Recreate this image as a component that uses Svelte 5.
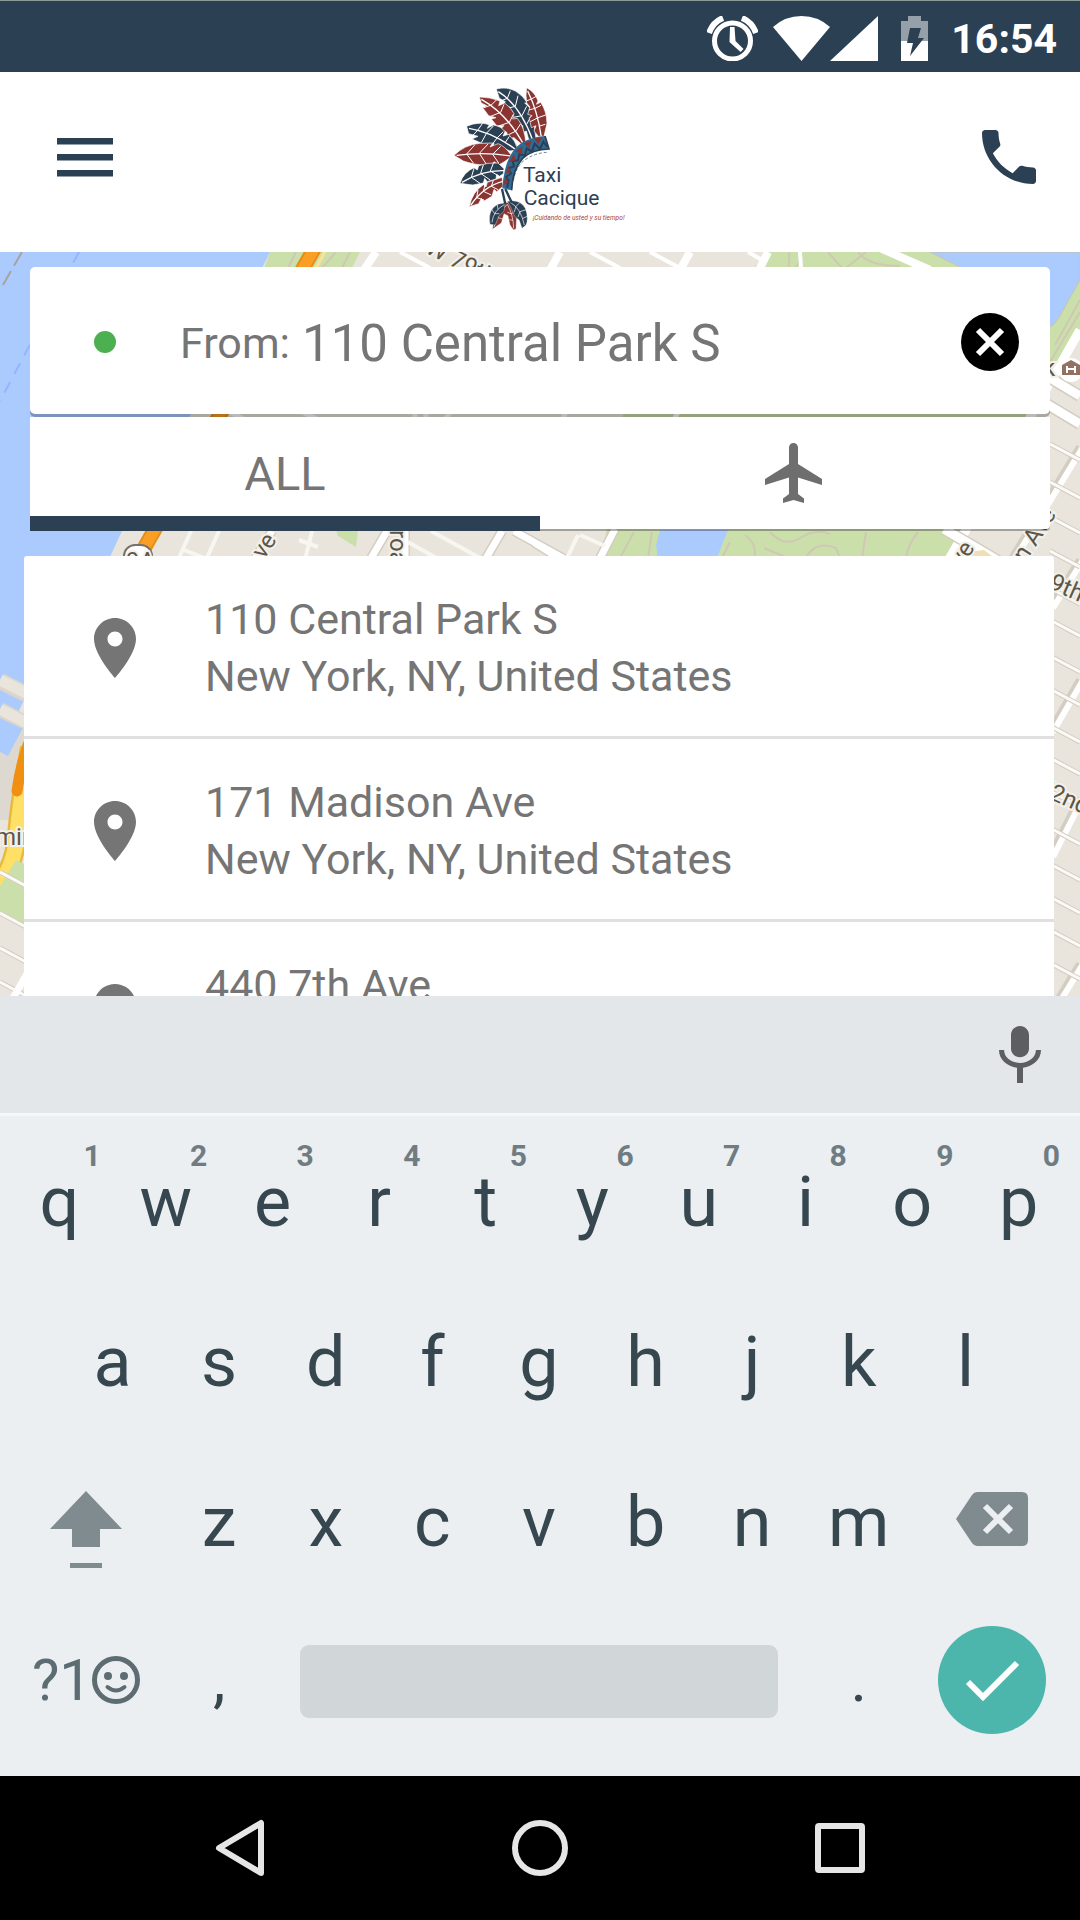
<script lang="ts">
  interface Place {
    street: string;
    city: string;
  }

  interface Feather {
    fill: string;
    body: string;
    shaft: string;
    barbs: string;
    small?: boolean;
  }

  const NAVY = '#2c4054';
  const RED = '#8a3531';

  const places: Place[] = [
    { street: '110 Central Park S', city: 'New York, NY, United States' },
    { street: '171 Madison Ave', city: 'New York, NY, United States' },
    { street: '440 7th Ave', city: 'New York, NY, United States' },
  ];

  const topRow = [...'qwertyuiop'].map((letter, i) => ({ letter, hint: (i + 1) % 10 }));
  const homeRow = [...'asdfghjkl'];
  const bottomRow = [...'zxcvbnm'];

  let from = $state('110 Central Park S');
  let tab = $state('all');

  // Headdress, from the top right feather round to the lower left one.
  const feathers: Feather[] = [
    {
      fill: NAVY,
      body: 'M199 42Q230 34 256 48Q280 62 292 84L284 84L302 101L306 126L298 128L312 146L318 192L296 193L289 168L280 172L278 152L262 140L238 130L247 108L232 108L240 96L218 92L226 80L208 70Z',
      shaft: 'M205 50Q270 90 308 195',
      barbs: 'M232 70L241 47M232 70L212 78M256 94L264 62M256 94L232 100M276 122L290 94M276 122L250 127M290 148L304 122',
    },
    {
      fill: RED,
      body: 'M290 38Q316 52 324 78L319 88L332 82Q350 108 351 145L342 184L325 184L312 168L318 152L304 158L298 130L306 122L293 118L300 96L290 84Q286 60 290 38Z',
      shaft: 'M293 48Q322 105 334 186',
      barbs: 'M304 72L319 64M304 72L289 78M315 100L333 91M315 100L296 105M324 128L347 120M324 128L301 140M329 153L346 148',
    },
    {
      fill: RED,
      body: 'M148 66Q180 66 210 78L206 92L224 84Q244 98 252 116L248 132L262 130Q284 156 288 207L277 210L252 188L235 190L230 172L212 162L222 152L200 152L184 132L198 128L176 122L158 98L170 92L154 84Z',
      shaft: 'M154 73Q230 115 282 210',
      barbs: 'M184 90L199 75M184 90L162 98M212 112L222 88M212 112L182 124M238 142L250 118M238 142L206 153M258 168L272 146M258 168L234 180',
    },
    {
      fill: NAVY,
      body: 'M110 154Q145 138 178 149L172 160L190 150Q214 154 225 170L219 183L236 178Q256 196 264 224L240 228L206 214L188 217L192 205L160 207L126 192L144 184L116 176Z',
      shaft: 'M117 160Q190 172 260 226',
      barbs: 'M143 166L157 146M143 166L124 186M170 174L190 153M170 174L154 203M202 188L220 170M202 188L184 212M226 202L238 184',
    },
    {
      fill: RED,
      body: 'M72 241Q104 209 150 205L188 204L180 216L204 206Q224 212 243 240L242 246Q226 260 206 270L192 260L184 272Q132 270 100 258Z',
      shaft: 'M80 241Q160 230 243 243',
      barbs: 'M110 237L134 210M110 237L130 264M148 235L174 207M148 235L170 269M188 238L212 214M188 238L206 264',
    },
    {
      fill: NAVY,
      body: 'M90 325Q100 292 132 278L142 285L146 272Q172 262 204 264L222 281L220 296L208 304L200 298L198 312L172 320L164 310L160 324L128 330Z',
      shaft: 'M96 322Q158 285 223 287',
      barbs: 'M124 307L132 280M124 307L150 325M152 295L160 270M152 295L180 315M181 288L190 265M181 288L206 303',
    },
    {
      fill: RED,
      body: 'M118 395Q126 352 160 329L168 336L172 322L216 307L219 334L200 350L192 343L186 364L162 378L154 370L146 386Z',
      shaft: 'M122 391Q158 336 218 319',
      barbs: 'M140 368L144 345M140 368L162 375M160 349L166 326M160 349L184 360M184 334L190 316M184 334L204 344',
    },
    {
      fill: RED,
      body: 'M188 462Q188 420 212 392L232 382Q254 394 260 420L258 462L250 464L240 450L234 422L222 416L214 444Z',
      shaft: 'M192 456Q202 414 232 388Q250 420 251 460',
      barbs: 'M204 428L198 416M204 428L218 432M244 416L232 412M244 416L258 410M249 436L238 434',
      small: true,
    },
    {
      fill: NAVY,
      body: 'M180 448Q172 404 204 388L226 383L222 408L206 424L196 450Z',
      shaft: 'M186 442Q190 406 224 388',
      barbs: 'M194 416L184 402M194 416L208 416M204 403L202 390',
      small: true,
    },
    {
      fill: NAVY,
      body: 'M232 379Q270 372 286 400Q297 430 288 450L276 460L268 436L254 424L242 396Z',
      shaft: 'M240 382Q272 398 283 450',
      barbs: 'M258 394L270 382M258 394L252 412M270 410L288 404M270 410L264 426M278 430L292 424',
      small: true,
    },
  ];

  // Cross streets running down to the right, and the avenues they meet.
  const crossStreets = [590, 622, 658, 691, 728, 760, 793, 830, 866, 899, 932, 965];
  const lowerStreets = [872, 913, 948, 982];
</script>

<div class="screen">
  <div class="status-bar">
    <svg class="status-icon" width="51" height="45" viewBox="0 0 51 45" aria-hidden="true">
      <circle cx="25.500" cy="25" r="18" fill="none" stroke="#fff" stroke-width="5" />
      <path d="M2 17Q6 6 16 2" fill="none" stroke="#fff" stroke-width="6" />
      <path d="M35 2Q45 6 49 17" fill="none" stroke="#fff" stroke-width="6" />
      <path d="M23 11h4.500l1 14 8 8-3 3-11-10z" fill="#fff" />
    </svg>
    <svg class="signal" width="105" height="45" viewBox="0 0 105 45" aria-hidden="true">
      <path d="M0 11Q12 0 28.500 0T57 11L28.500 45z" fill="#fff" />
      <path d="M57 45L105 0V45z" fill="#fff" />
    </svg>
    <svg class="battery" width="27" height="45" viewBox="0 0 27 45" aria-hidden="true">
      <path d="M0 5h7V0h13v5h7v20H0z" fill="#95a0a9" />
      <path d="M0 25h27v20H0z" fill="#fff" />
      <path d="M9 12h11l-3 10h6L9 40l3-13H6z" fill="#2c4054" />
    </svg>
    <time>16:54</time>
  </div>

  <header class="app-bar">
    <button class="icon-btn" aria-label="Menu">
      <svg width="56" height="39" viewBox="0 0 56 39">
        <path d="M0 0h56v6.500H0zM0 16h56v6.500H0zM0 32h56v6.500H0z" fill="#2c4054" />
      </svg>
    </button>

    <svg class="logo" width="220" height="170" viewBox="0 -9 660 510" role="img" aria-label="Taxi Cacique">
      {#each feathers as feather}
        <path d={feather.body} fill={feather.fill} stroke="#fff" stroke-width={feather.small ? 1 : 2} />
        <path d={feather.shaft} fill="none" stroke="#fff" stroke-width={feather.small ? 2 : 4} />
        <path d={feather.barbs} fill="none" stroke="#fff" stroke-width={feather.small ? 2 : 3} />
      {/each}
      <path d="M216 342L226 388M226 342L246 384" stroke={NAVY} stroke-width="7" />
      <path d="M345 183Q282 188 252 224Q222 264 217 340L245 346Q247 284 278 250Q306 223 357 222Z" fill="#2f6a94" />
      <path d="M345 183L357 222Q306 223 278 250Q247 284 245 346" fill="none" stroke={NAVY} stroke-width="5" />
      <path
        d="M231 338L236 316L228 306L243 296L236 280L252 274L248 258L264 256L268 238L284 242L290 220L306 230L314 206L330 222L340 200L352 216"
        fill="none"
        stroke={NAVY}
        stroke-width="6"
      />
      <path
        d="M312 190L336 188L325 207ZM281 205L305 197L297 219ZM255 230L276 214L277 236ZM237 262L252 236L256 256ZM227 296L236 270L242 290ZM221 330L226 305L236 322Z"
        fill={RED}
      />
      <path d="M250 318Q257 276 283 256Q312 235 350 232" fill="none" stroke={NAVY} stroke-width="2" stroke-dasharray="9 6" />
      <text class="logo-name" x="279" y="320">Taxi</text>
      <text class="logo-name" x="281" y="390">Cacique</text>
      <text class="logo-tagline" x="308" y="434">¡Cuidando de usted y su tiempo!</text>
    </svg>

    <button class="icon-btn call" aria-label="Call">
      <svg width="72" height="72" viewBox="0 0 24 24">
        <path
          d="M6.620 10.790c1.440 2.830 3.760 5.140 6.590 6.590l2.200-2.200c.27-.27.67-.36 1.020-.24 1.120.37 2.330.57 3.570.57.55 0 1 .45 1 1V20c0 .55-.45 1-1 1-9.390 0-17-7.610-17-17 0-.55.45-1 1-1h3.500c.55 0 1 .45 1 1 0 1.250.2 2.450.57 3.570.11.35.03.74-.25 1.020l-2.200 2.200z"
          fill="#2c4054"
        />
      </svg>
    </button>
  </header>

  <main class="map-area">
    <svg class="map" viewBox="0 252 1080 744" preserveAspectRatio="xMidYMin slice" aria-hidden="true">
      <rect y="252" width="1080" height="744" fill="#e9e5dc" />

      <!-- Hudson River -->
      <path d="M0 252H270L191 414L122 531L90 600L24 700L0 752Z" fill="#abcbff" />
      <path d="M22 252L0 290" stroke="#a9a29c" stroke-width="2" stroke-dasharray="16 6" />
      <path d="M79 252L0 401" stroke="#8fb7fa" stroke-width="2" stroke-dasharray="12 9" />
      <path d="M0 681L40 701M0 710L40 731" stroke="#dcd6ca" stroke-width="16" />
      <path d="M0 680L40 700M0 709L40 730" stroke="#e9e5dc" stroke-width="11" />
      <path d="M0 718L23 729L8 757L0 752Z" fill="#abcbff" />
      <path d="M0 752L8 756L23 728L60 690V820H0Z" fill="#ddd9d1" />

      <!-- Parks -->
      <path d="M270 252L264 268H352L360 252Z" fill="#cbdfab" />
      <path d="M296 252L288 268M336 252L322 268M350 252L342 268" stroke="#cfc8b4" stroke-width="2" />
      <path d="M768 252L623 415L602 560H950L1030 415L1050 380L1080 330V252Z" fill="#cbdfab" />
      <path d="M789 252Q790 262 788 270Q800 270 801 252" fill="none" stroke="#cfc8b4" stroke-width="2" />
      <path d="M828 252L842 268M866 252L846 268M858 252Q868 266 900 266" fill="none" stroke="#cfc8b4" stroke-width="2" />
      <path d="M1080 300L1055 345M1080 312L1050 362" stroke="#cfc8b4" stroke-width="2" />
      <path d="M336 530L358 530L356 547L338 536Z" fill="#cbdfab" />

      <!-- Reservoir and lake -->
      <path d="M930 252H1080V280L1062 312Q1056 324 1050 327L962 268Z" fill="#abcbff" stroke="#c9c4a8" stroke-width="1" />
      <path d="M660 530H728L716 560H658L656 545Z" fill="#abcbff" />
      <path
        d="M634 532L620 558M652 532L648 558M730 542L722 558M745 535Q758 545 754 558M770 532Q784 548 800 538T830 534M806 558Q815 540 836 548L840 558M866 532L862 558M918 532Q908 544 906 558M764 548L788 558"
        fill="none"
        stroke="#cfc8b4"
        stroke-width="2"
      />

      <!-- Streets under the tab strip -->
      <g fill="none" stroke="#d3cdc2" stroke-width="10">
        <path d="M272 531L245 575M387 531L370 560M405 531V560M502 531L485 560M514 531L570 562M535 543L575 568M615 529L598 562" />
      </g>
      <g fill="none" stroke="#fff" stroke-width="7">
        <path d="M272 531L245 575M387 531L370 560M405 531V560M502 531L485 560M514 531L570 562M535 543L575 568M615 529L598 562" />
      </g>
      <path
        d="M191 531L178 560M219 531L206 560M184 550L215 562M299 540L318 547M312 531L305 560M408 542L440 560M431 531L480 558M578 535L566 560M580 535L605 546"
        fill="none"
        stroke="#f8f6f1"
        stroke-width="4"
      />

      <!-- Streets above the search card -->
      <path d="M768 252L758 272M376 252L364 270M560 252L550 270M690 252L680 270M880 248L930 270" stroke="#fff" stroke-width="8" />
      <path d="M400 252L430 268M470 262L482 268M590 252L620 268M650 252L680 268M748 252L762 260M800 252L801 268" stroke="#fff" stroke-width="4" />

      <!-- Streets in the gap between search card and tabs -->
      <path
        d="M230 412L245 420M303 412L318 420M415 412V420M426 412V420M450 412L445 420M566 412L562 420M678 412L674 420"
        stroke="#fff"
        stroke-width="5"
      />

      <!-- Henry Hudson Parkway -->
      <path d="M318 242L134 566" stroke="#e48f14" stroke-width="15" />
      <path d="M318 242L134 566" stroke="#fb9e26" stroke-width="11" />
      <path d="M325 252L316 268" stroke="#fde293" stroke-width="3" />
      <path d="M30 748Q20 800 17 835T-6 890" fill="none" stroke="#e9b93c" stroke-width="20" />
      <path d="M30 748Q20 800 17 835T-6 890" fill="none" stroke="#ffe066" stroke-width="15" />
      <path d="M28 745Q20 768 17 791" fill="none" stroke="#f08f12" stroke-width="11" stroke-linecap="round" />
      <path d="M16 860L24 864V924L0 912V886Z" fill="#cbdfab" />
      <rect x="124" y="545" width="28" height="30" rx="11" fill="#fff" stroke="#77736c" stroke-width="2" />

      <!-- Upper West Side and its avenues, right edge -->
      <path d="M1080 330L940 575" stroke="#fff" stroke-width="9" />
      <path d="M1040 400L1080 424M1040 372L1080 396M944 529L1000 562" stroke="#d3cdc2" stroke-width="12" />
      <path d="M1040 400L1080 424M1040 372L1080 396M944 529L1000 562" stroke="#fff" stroke-width="9" />
      <path d="M966 552L984 550L1000 562H960Z" fill="#f0dfb5" />
      <g stroke="#d3cdc2" stroke-width="8">
        <path d="M1080 447L1010 562M1080 560L1050 608M1080 680L1050 732M1080 798L1050 857M1080 964L1058 1000" />
      </g>
      <g stroke="#fff" stroke-width="6">
        <path d="M1083 447L1013 562M1083 560L1053 608M1083 680L1053 732M1083 798L1053 857M1083 964L1061 1000" />
      </g>
      {#each [446, 484, 519, 553, ...crossStreets] as y}
        <path d="M1050 {y - 2}L1080 {y + 14}" stroke="#d3cdc2" stroke-width="5" />
        <path d="M1050 {y - 2}L1080 {y + 14}" stroke="#fbfaf6" stroke-width="3" />
      {/each}
      {#each lowerStreets as y}
        <path d="M0 {y}L26 {y + 14}" stroke="#d3cdc2" stroke-width="5" />
        <path d="M0 {y}L26 {y + 14}" stroke="#fbfaf6" stroke-width="3" />
      {/each}
      <path d="M28 972L12 1000" stroke="#fff" stroke-width="7" />

      <!-- Museum pin -->
      <circle cx="1071" cy="370" r="12" fill="#fff" />
      <path d="M1062 365L1071 360L1080 365V375H1062Z" fill="#937065" />
      <path d="M1067 366V373M1075 366V373M1067 369H1075" stroke="#fff" stroke-width="2" />

      <g class="map-labels">
        <text x="126" y="569">9A</text>
        <text transform="translate(264 560) rotate(-57)">ve</text>
        <text transform="translate(390 530) rotate(90)">road</text>
        <text transform="translate(424 252) rotate(27)">W 79th</text>
        <text transform="translate(962 568) rotate(-57)">ve</text>
        <text transform="translate(1018 574) rotate(-57)">en Ave</text>
        <text transform="translate(1048 588) rotate(24)">9th</text>
        <text transform="translate(1036 793) rotate(24)">72nd</text>
        <text x="1043" y="376">k</text>
        <text x="-5" y="845">min</text>
      </g>
    </svg>

    <div class="search">
      <label class="search-card">
        <span class="dot"></span>
        <span class="search-label">From:</span>
        <input type="text" bind:value={from} spellcheck={false} />
        <button class="clear" aria-label="Clear" onclick={() => (from = '')}>
          <svg width="58" height="58" viewBox="0 0 58 58">
            <circle cx="29" cy="29" r="29" fill="#000" />
            <path d="M17 17L41 41M41 17L17 41" stroke="#fff" stroke-width="6" />
          </svg>
        </button>
      </label>

      <div class="tabs" role="tablist">
        <button role="tab" aria-selected={tab === 'all'} class:active={tab === 'all'} onclick={() => (tab = 'all')}>
          ALL
        </button>
        <button
          role="tab"
          aria-label="Airports"
          aria-selected={tab === 'airports'}
          class:active={tab === 'airports'}
          onclick={() => (tab = 'airports')}
        >
          <svg width="72" height="72" viewBox="0 0 24 24">
            <path
              d="M21 16v-2l-8-5V3.500c0-.83-.67-1.500-1.500-1.500S10 2.670 10 3.500V9l-8 5v2l8-2.500V19l-2 1.500V22l3.500-1 3.500 1v-1.500L13 19v-5.500l8 2.500z"
              fill="#6e6e6e"
            />
          </svg>
        </button>
      </div>
    </div>

    <ul class="places">
      {#each places as place}
        <li>
          <button class="place">
            <svg width="72" height="72" viewBox="0 0 24 24" aria-hidden="true">
              <path
                d="M12 2C8.130 2 5 5.130 5 9c0 5.250 7 13 7 13s7-7.750 7-13c0-3.870-3.130-7-7-7zm0 9.500c-1.380 0-2.500-1.120-2.500-2.500s1.120-2.500 2.500-2.500 2.500 1.120 2.500 2.500-1.120 2.500-2.500 2.500z"
                fill="#757575"
              />
            </svg>
            <span class="address">
              <span>{place.street}</span>
              <span>{place.city}</span>
            </span>
          </button>
        </li>
      {/each}
    </ul>
  </main>

  <section class="keyboard" aria-label="Keyboard">
    <div class="suggestions">
      <button class="icon-btn" aria-label="Voice input">
        <svg width="72" height="72" viewBox="0 0 24 24">
          <path
            d="M12 12.400c1.660 0 3-1.240 3-2.900V5c0-1.660-1.340-3-3-3S9 3.340 9 5v4.500c0 1.660 1.340 2.900 3 2.900zM17.300 10c0 2.600-2.540 4.300-5.300 4.300S6.700 12.600 6.700 10H5c0 3.210 2.720 5.430 6 5.950V21h2v-5.050c3.280-.48 6-2.740 6-5.950h-1.700z"
            fill="#5c5e60"
          />
        </svg>
      </button>
    </div>

    <div class="keys">
      <div class="row">
        {#each topRow as key}
          <button class="key">{key.letter}<span class="hint">{key.hint}</span></button>
        {/each}
      </div>
      <div class="row home">
        {#each homeRow as letter}
          <button class="key">{letter}</button>
        {/each}
      </div>
      <div class="row">
        <button class="key wide" aria-label="Shift">
          <svg width="72" height="94" viewBox="0 0 72 94">
            <path d="M36 16L72 54H50V72H22V54H0ZM20 88H52V93H20Z" fill="#808b8f" />
          </svg>
        </button>
        {#each bottomRow as letter}
          <button class="key">{letter}</button>
        {/each}
        <button class="key wide" aria-label="Backspace">
          <svg width="72" height="60" viewBox="0 0 72 60">
            <path d="M0 27L16 3Q18 0 21 0H66Q72 0 72 6V48Q72 54 66 54H21Q18 54 16 51Z" fill="#808b8f" />
            <path d="M29 14L55 40M55 14L29 40" stroke="#ebeff2" stroke-width="6" />
          </svg>
        </button>
      </div>
      <div class="row last">
        <button class="key wide symbols" aria-label="Symbols and emoji">
          <span>?1</span>
          <svg width="48" height="48" viewBox="0 0 48 48">
            <circle cx="24" cy="24" r="21.500" fill="none" stroke="#5d6c72" stroke-width="5" />
            <circle cx="16" cy="20" r="4" fill="#5d6c72" />
            <circle cx="32" cy="20" r="4" fill="#5d6c72" />
            <path d="M15.500 31Q24 38 32.500 31" fill="none" stroke="#5d6c72" stroke-width="4" stroke-linecap="round" />
          </svg>
        </button>
        <button class="key mark">,</button>
        <button class="key space" aria-label="Space"><span></span></button>
        <button class="key mark">.</button>
        <button class="key wide" aria-label="Done">
          <svg width="108" height="108" viewBox="0 0 108 108">
            <circle cx="54" cy="54" r="54" fill="#4db6ac" />
            <path d="M30 56L45 71L79 37" fill="none" stroke="#fff" stroke-width="6" />
          </svg>
        </button>
      </div>
    </div>
  </section>

  <nav class="nav-bar">
    <button aria-label="Back">
      <svg width="54" height="60" viewBox="0 0 54 60">
        <path d="M48 5V55L6 30Z" fill="none" stroke="#e6e6e6" stroke-width="6" stroke-linejoin="round" />
      </svg>
    </button>
    <button aria-label="Home">
      <svg width="56" height="56" viewBox="0 0 56 56">
        <circle cx="28" cy="28" r="25" fill="none" stroke="#e6e6e6" stroke-width="6" />
      </svg>
    </button>
    <button aria-label="Recent apps">
      <svg width="50" height="50" viewBox="0 0 50 50">
        <rect x="3" y="3" width="44" height="44" rx="1" fill="none" stroke="#e6e6e6" stroke-width="6" stroke-linejoin="round" />
      </svg>
    </button>
  </nav>
</div>

<style>
  :global(body) {
    margin: 0;
  }

  .screen {
    display: flex;
    flex-direction: column;
    height: 100vh;
    overflow: hidden;
    background: #000;
    font-family: Roboto, sans-serif;
    color: #757575;
  }

  button {
    margin: 0;
    padding: 0;
    border: 0;
    background: none;
    color: inherit;
    font: inherit;
    cursor: pointer;
  }

  svg {
    display: block;
    flex: none;
  }

  .icon-btn {
    justify-self: start;
  }

  /* ── Status bar ───────────────────────────────────────── */
  .status-bar {
    display: flex;
    flex: none;
    align-items: center;
    justify-content: flex-end;
    box-sizing: border-box;
    height: 72px;
    padding: 4px 23px 0 0;
    border-top: 1px solid #8d9c97;
    background: #2c4054;
    color: #fff;
  }

  .status-icon {
    margin-right: 15px;
  }

  .signal,
  .battery {
    margin-right: 23px;
  }

  .status-bar time {
    font-size: 41px;
    font-weight: 700;
    line-height: 48px;
  }

  /* ── App bar ──────────────────────────────────────────── */
  .app-bar {
    display: grid;
    flex: none;
    grid-template-columns: 1fr auto 1fr;
    align-items: center;
    box-sizing: border-box;
    height: 180px;
    padding: 0 35px 14px 57px;
    background: #fff;
  }

  .app-bar .logo {
    margin: 0 11px 0 -11px;
  }

  .call {
    justify-self: end;
  }

  .logo-name {
    font-size: 63px;
    fill: #2c4054;
  }

  .logo-tagline {
    font-size: 20px;
    font-style: italic;
    fill: #a8423c;
  }

  /* ── Map ──────────────────────────────────────────────── */
  .map-area {
    position: relative;
    flex: 1;
    min-height: 0;
    overflow: hidden;
  }

  .map {
    position: absolute;
    inset: 0;
    width: 100%;
    height: 100%;
  }

  .map-labels {
    font-size: 24px;
    fill: #5c5648;
    stroke: #f3f0e9;
    stroke-width: 4px;
    paint-order: stroke;
  }

  /* ── Search ───────────────────────────────────────────── */
  .search {
    position: relative;
    display: flex;
    flex-direction: column;
    gap: 3px;
    padding: 15px 30px 0;
  }

  .search-card {
    display: flex;
    align-items: center;
    box-sizing: border-box;
    height: 147px;
    padding: 2px 31px 0 64px;
    border-radius: 5px;
    background: #fff;
    box-shadow: 0 3px 0 rgba(0, 0, 0, 0.27);
  }

  .dot {
    flex: none;
    width: 22px;
    height: 22px;
    margin-right: 64px;
    border-radius: 50%;
    background: #4caf50;
  }

  .search-label {
    margin-right: 12px;
    padding-top: 3px;
    font-size: 43px;
  }

  .search-card input {
    flex: 1;
    min-width: 0;
    height: 64px;
    padding: 4px 0 0;
    border: 0;
    outline: none;
    background: none;
    color: #757575;
    font-family: inherit;
    font-size: 51px;
  }

  .tabs {
    display: grid;
    grid-template-columns: 1fr 1fr;
    height: 112px;
    border-radius: 0 0 4px 4px;
    background: #fff;
    box-shadow: 0 2px 0 rgba(0, 0, 0, 0.3);
  }

  .tabs button {
    position: relative;
    display: flex;
    align-items: center;
    justify-content: center;
    font-size: 47px;
  }

  .tabs .active::after {
    content: '';
    position: absolute;
    inset: auto 0 -2px;
    height: 15px;
    background: #2c4054;
  }

  /* ── Results ──────────────────────────────────────────── */
  .places {
    position: relative;
    margin: 27px 26px 0 24px;
    padding: 0;
    border-radius: 3px 3px 0 0;
    background: #fff;
    list-style: none;
  }

  .places li + li {
    border-top: 3px solid #e0e0e0;
  }

  .place {
    display: flex;
    align-items: center;
    gap: 54px;
    width: 100%;
    height: 180px;
    padding: 3px 55px 0;
    text-align: left;
  }

  .address {
    display: flex;
    flex-direction: column;
    font-size: 43px;
    line-height: 57px;
  }

  /* ── Keyboard ─────────────────────────────────────────── */
  .keyboard {
    flex: none;
    background: #ebeff2;
    color: #37474f;
  }

  .suggestions {
    display: flex;
    align-items: center;
    justify-content: flex-end;
    height: 115px;
    padding: 2px 24px 0;
    border-bottom: 3px solid #f5f7f8;
    background: #e3e7ea;
  }

  .keys {
    padding: 6px 8px 18px 6px;
  }

  .row {
    display: grid;
    grid-template-columns: repeat(20, 1fr);
    height: 160px;
  }

  .row.last {
    height: 156px;
  }

  .key {
    position: relative;
    display: flex;
    grid-column: span 2;
    align-items: center;
    justify-content: center;
    font-size: 70px;
    line-height: 82px;
  }

  .home .key:first-child {
    grid-column: 2 / span 2;
  }

  .key.wide {
    grid-column: span 3;
  }

  .key.space {
    grid-column: span 10;
    padding: 2px 28px 0;
  }

  .key.mark {
    font-size: 63px;
  }

  .space span {
    width: 100%;
    height: 73px;
    border-radius: 9px;
    background: #d1d6d9;
  }

  .key.symbols {
    color: #5d6c72;
    font-size: 58px;
  }

  .hint {
    position: absolute;
    top: 16px;
    right: 12px;
    color: #6f7c81;
    font-size: 30px;
    font-weight: 700;
    line-height: 36px;
  }

  /* ── Navigation bar ───────────────────────────────────── */
  .nav-bar {
    display: grid;
    flex: none;
    grid-template-columns: repeat(3, 1fr);
    height: 144px;
    padding: 0 90px;
    background: #000;
  }

  .nav-bar button {
    display: flex;
    align-items: center;
    justify-content: center;
  }
</style>
